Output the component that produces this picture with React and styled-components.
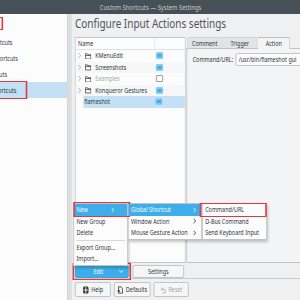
import React from 'react';
import styled, { createGlobalStyle } from 'styled-components';

// the reference is a squeezed screenshot: lay out wide, then squash horizontally
const SQUASH = 0.78;
const STAGE_W = 386;

const Global = createGlobalStyle`
  html, body { margin: 0; padding: 0; background: #eff0f1; overflow: hidden; }
  body {
    font-family: "Noto Sans", "Open Sans", sans-serif;
    font-size: 7px;
    color: #31363b;
  }
`;

const Stage = styled.div`
  position: relative;
  width: ${STAGE_W}px;
  height: 300px;
  transform: scaleX(${SQUASH});
  transform-origin: 0 0;
  display: flex;
  flex-direction: column;
  background: #eff0f1;
  overflow: hidden;
`;

const TitleBar = styled.header`
  height: 14px;
  flex: none;
  background: #475057;
  color: #c6c9cc;
  font-size: 7.5px;
  display: flex;
  align-items: center;
  justify-content: center;
`;

const Body = styled.div`
  flex: 1;
  min-height: 0;
  display: flex;
`;

const Sidebar = styled.aside`
  width: 86px;
  flex: none;
  background: #fcfcfc;
  overflow: hidden;
  display: flex;
  flex-direction: column;
`;

const SideTop = styled.div`
  position: relative;
  height: 20px;
  flex: none;
`;

const SideRow = styled.div`
  position: relative;
  height: 16px;
  flex: none;
  display: flex;
  align-items: center;
  background: ${p => (p.$selected ? '#c3e0f4' : 'transparent')};
`;

const SideLabel = styled.span`
  width: ${p => p.$end}px;
  flex: none;
  display: flex;
  justify-content: flex-end;
  white-space: nowrap;
`;

const Splitter = styled.div`
  width: 5px;
  flex: none;
  background: #dcdee0;
  border-left: 1px solid #d0d2d4;
`;

const Main = styled.main`
  flex: 1;
  min-width: 0;
  display: flex;
  flex-direction: column;
  padding-left: 4px;
`;

const Heading = styled.h1`
  margin: 0 0 5px;
  font-size: 12.8px;
  line-height: 18px;
  font-weight: 400;
  color: #50555a;
  white-space: nowrap;
`;

const Work = styled.div`
  height: 226px;
  flex: none;
  display: flex;
  gap: 1px;
`;

const Tree = styled.div`
  width: 140px;
  flex: none;
  background: #fcfcfc;
  border: 1px solid #c2c4c6;
  display: flex;
  flex-direction: column;
`;

const TreeHead = styled.div`
  height: 11px;
  flex: none;
  display: flex;
  border-bottom: 1px solid #dfe1e2;
`;

const HeadCell = styled.div`
  width: ${p => (p.$w ? `${p.$w}px` : 'auto')};
  flex: ${p => (p.$w ? 'none' : '1')};
  display: flex;
  align-items: center;
  padding-left: 3px;
  border-left: ${p => (p.$w ? 'none' : '1px solid #dfe1e2')};
`;

const TreeRow = styled.div`
  height: 11.5px;
  flex: none;
  display: flex;
  padding-left: ${p => p.$indent || 0}px;
  background: ${p => (p.$alt ? '#f6f7f7' : 'transparent')};
`;

const RowBody = styled.div`
  flex: 1;
  display: flex;
  align-items: center;
  background: ${p => (p.$selected ? '#c3e0f4' : 'transparent')};
`;

const NameCell = styled.div`
  width: ${p => p.$w}px;
  flex: none;
  display: flex;
  align-items: center;
  padding-left: ${p => p.$pad}px;
  color: ${p => (p.$muted ? '#a4a7aa' : '#31363b')};
  white-space: nowrap;
`;

const Twisty = styled.svg`
  width: 6px;
  height: 7px;
  margin-right: 4px;
  flex: none;
`;

const FolderIcon = styled.svg`
  width: 8px;
  height: 6.5px;
  margin-right: 5px;
  flex: none;
`;

const CheckCell = styled.div`
  flex: 1;
  display: flex;
  align-items: center;
  padding-left: 3px;
`;

const Check = styled.span`
  width: 9px;
  height: 7px;
  box-sizing: border-box;
  border: 1px solid ${p => (p.$on ? '#8ccbef' : '#8f9295')};
  background: ${p => (p.$on ? '#3daee9' : '#fcfcfc')};
  box-shadow: ${p => (p.$on ? 'inset 0 0 0 0.6px #bfe3f7' : 'none')};
  border-radius: 1px;
`;

const Tabs = styled.div`
  flex: 1;
  min-width: 0;
  margin-right: -2px;
  display: flex;
  flex-direction: column;
`;

const TabBar = styled.div`
  height: 11px;
  flex: none;
  display: flex;
  align-items: flex-end;
  padding-left: 1px;
  position: relative;
  z-index: 1;
`;

const Tab = styled.div`
  width: ${p => p.$w}px;
  height: ${p => (p.$active ? 12 : 11)}px;
  box-sizing: border-box;
  margin-bottom: ${p => (p.$active ? -1 : 0)}px;
  display: flex;
  align-items: center;
  justify-content: center;
  background: ${p => (p.$active ? '#f3f4f5' : '#e1e3e5')};
  border: 1px solid ${p => (p.$active ? '#bcbec0' : '#cfd1d3')};
  border-bottom: none;
  border-radius: 1.5px 1.5px 0 0;
`;

const Page = styled.div`
  flex: 1;
  background: #f3f4f5;
  border: 1px solid #c2c4c6;
  padding: 4px 0 0 7px;
  overflow: hidden;
`;

const Field = styled.div`
  display: flex;
  align-items: center;
  height: 13px;
`;

const FieldLabel = styled.span`
  width: 55px;
  flex: none;
  white-space: nowrap;
`;

const Input = styled.div`
  width: 120px;
  height: 13px;
  flex: none;
  box-sizing: border-box;
  display: flex;
  align-items: center;
  padding-left: 3px;
  background: #fcfcfc;
  border: 1px solid #bcbec0;
  border-radius: 2px;
  white-space: nowrap;
`;

const ActionRow = styled.div`
  height: 13px;
  flex: none;
  margin-top: 2px;
  display: flex;
  gap: 5px;
`;

const EditWrap = styled.div`
  position: relative;
  display: flex;
`;

const EditButton = styled.div`
  width: 69px;
  box-sizing: border-box;
  display: flex;
  align-items: center;
  background: #3daee9;
  border: 1px solid #2c9fda;
  border-radius: 2px;
  color: #fcfcfc;
`;

const EditText = styled.span`
  flex: 1;
  text-align: center;
  padding-left: 3px;
`;

const Caret = styled.svg`
  width: 7px;
  height: 5px;
  margin-right: 5px;
  flex: none;
`;

const Button = styled.div`
  width: ${p => p.$w}px;
  box-sizing: border-box;
  display: flex;
  align-items: center;
  justify-content: center;
  gap: 3px;
  background: #f5f6f6;
  border: 1px solid #bcbec0;
  border-radius: 2px;
  color: ${p => (p.$disabled ? '#a2a5a8' : '#31363b')};
`;

const BottomBar = styled.footer`
  flex: none;
  margin: 0 0 0 -4px;
  padding: 3px 0 3px 4px;
  border-top: 1px solid #c8cacc;
  display: flex;
  gap: 4px;
  height: 15px;
`;

const BtnIcon = styled.svg`
  width: 8px;
  height: 8px;
  flex: none;
`;

const MenuLayer = styled.div`
  position: absolute;
  left: 94px;
  top: 203px;
  display: flex;
  align-items: flex-start;
`;

const Menu = styled.div`
  --pr: ${p => p.$pr}px;
  width: ${p => p.$w}px;
  box-sizing: border-box;
  background: #fcfcfc;
  border: 1px solid #c0c2c4;
  box-shadow: 1px 2px 3px rgba(0, 0, 0, 0.22);
`;

const MenuItem = styled.div`
  position: relative;
  height: 11.5px;
  display: flex;
  align-items: center;
  padding: 0 var(--pr) 0 3px;
  white-space: nowrap;
  background: ${p => (p.$hl ? '#3daee9' : 'transparent')};
  color: ${p => (p.$hl ? '#fcfcfc' : '#31363b')};
`;

const MenuSep = styled.div`
  height: 3px;
  display: flex;
  align-items: center;
  &::after {
    content: '';
    flex: 1;
    height: 1px;
    margin: 0 3px;
    background: #d6d8da;
  }
`;

const Arrow = styled.svg`
  width: 5px;
  height: 6px;
  margin-left: auto;
  flex: none;
`;

const Frame = styled.span`
  position: absolute;
  pointer-events: none;
  top: ${p => p.$t}px;
  right: ${p => p.$r}px;
  bottom: ${p => p.$b}px;
  left: ${p => p.$l}px;
  border: 1.5px solid #e8363c;
  border-left-width: 2px;
  border-right-width: 2px;
`;

const sideItems = [
  { label: 'Global Shortcuts', end: 16 },
  { label: 'Standard Shortcuts', end: 23 },
  { label: 'Web Shortcuts', end: 9 },
  { label: 'Custom Shortcuts', end: 21, selected: true },
];

const groups = [
  { name: 'KMenuEdit', on: true },
  { name: 'Screenshots', on: true },
  { name: 'Examples', on: false, muted: true },
  { name: 'Konqueror Gestures', on: true },
];

const Chevron = ({ color = '#9da0a3' }) => (
  <Twisty viewBox="0 0 6 8">
    <path d="M1.5 1 L4.5 4 L1.5 7" fill="none" stroke={color} strokeWidth="1" />
  </Twisty>
);

const Folder = () => (
  <FolderIcon viewBox="0 0 16 13">
    <path d="M1 1.5h5l1.5 2H15v8.5H1z M1 5h14" fill="none" stroke="#31363b" strokeWidth="1.6" />
  </FolderIcon>
);

const SubArrow = () => (
  <Arrow viewBox="0 0 5 6">
    <path d="M1.2 0.8 L3.8 3 L1.2 5.2" fill="none" stroke="currentColor" strokeWidth="0.9" />
  </Arrow>
);

export default function App() {
  return (
    <>
      <Global />
      <Stage>
        <TitleBar>Custom Shortcuts — System Settings</TitleBar>
        <Body>
          <Sidebar>
            <SideTop>
              <Frame $t={3} $b={4} $l={-40} $r={82} />
            </SideTop>
            {sideItems.map(it => (
              <SideRow key={it.label} $selected={it.selected}>
                <SideLabel $end={it.end}>{it.label}</SideLabel>
                {it.selected && <Frame $t={-1} $b={-1} $l={-10} $r={51} />}
              </SideRow>
            ))}
          </Sidebar>
          <Splitter />
          <Main>
            <Heading>Configure Input Actions settings</Heading>
            <Work>
              <Tree>
                <TreeHead>
                  <HeadCell $w={98}>Name</HeadCell>
                  <HeadCell />
                </TreeHead>
                {groups.map((g, i) => (
                  <TreeRow key={g.name} $alt={i % 2 === 1}>
                    <RowBody>
                      <NameCell $w={98} $pad={2} $muted={g.muted}>
                        <Chevron />
                        <Folder />
                        {g.name}
                      </NameCell>
                      <CheckCell>
                        <Check $on={g.on} />
                      </CheckCell>
                    </RowBody>
                  </TreeRow>
                ))}
                <TreeRow $indent={10}>
                  <RowBody $selected>
                    <NameCell $w={88} $pad={1}>flameshot</NameCell>
                    <CheckCell>
                      <Check $on />
                    </CheckCell>
                  </RowBody>
                </TreeRow>
              </Tree>
              <Tabs>
                <TabBar>
                  <Tab $w={45}>Comment</Tab>
                  <Tab $w={45}>Trigger</Tab>
                  <Tab $w={42} $active>Action</Tab>
                </TabBar>
                <Page>
                  <Field>
                    <FieldLabel>Command/URL:</FieldLabel>
                    <Input>/usr/bin/flameshot gui</Input>
                  </Field>
                </Page>
              </Tabs>
            </Work>
            <ActionRow>
              <EditWrap>
                <EditButton>
                  <EditText>Edit</EditText>
                  <Caret viewBox="0 0 7 5">
                    <path d="M1 1.2 L3.5 3.6 L6 1.2" fill="none" stroke="#fcfcfc" strokeWidth="0.9" />
                  </Caret>
                </EditButton>
                <Frame $t={-2} $b={-2} $l={-3} $r={-3} />
              </EditWrap>
              <Button $w={66}>Settings</Button>
            </ActionRow>
            <BottomBar>
              <Button $w={46}>
                <BtnIcon viewBox="0 0 8 8">
                  <rect x="0.5" y="0.5" width="7" height="7" rx="1.5" fill="#31363b" />
                  <path d="M4 1v6 M1 4h6" stroke="#f5f6f6" strokeWidth="1" />
                </BtnIcon>
                Help
              </Button>
              <Button $w={47}>
                <BtnIcon viewBox="0 0 8 8">
                  <path d="M2 0.8h3.2l1.8 1.8v4.6H2z" fill="none" stroke="#31363b" strokeWidth="0.9" />
                  <path d="M0.6 5h3 M2 3.8 L3.4 5 L2 6.2" fill="none" stroke="#31363b" strokeWidth="0.9" />
                </BtnIcon>
                Defaults
              </Button>
              <Button $w={45} $disabled>
                <BtnIcon viewBox="0 0 8 8">
                  <path d="M2.2 3.2h3a2 2 0 0 1 0 4H3.5 M3.6 1.6 L2 3.2 L3.6 4.8" fill="none" stroke="#a2a5a8" strokeWidth="0.9" />
                </BtnIcon>
                Reset
              </Button>
            </BottomBar>
          </Main>
        </Body>

        <MenuLayer>
          <Menu $w={70} $pr={16}>
            <MenuItem $hl>
              New
              <SubArrow />
              <Frame $t={-2} $b={-1.5} $l={-1} $r={-4} />
            </MenuItem>
            <MenuItem>New Group</MenuItem>
            <MenuItem>Delete</MenuItem>
            <MenuSep />
            <MenuItem>Export Group...</MenuItem>
            <MenuItem>Import...</MenuItem>
          </Menu>
          <Menu $w={95} $pr={6}>
            <MenuItem $hl>
              Global Shortcut
              <SubArrow />
            </MenuItem>
            <MenuItem>
              Window Action
              <SubArrow />
            </MenuItem>
            <MenuItem>
              Mouse Gesture Action
              <SubArrow />
            </MenuItem>
          </Menu>
          <Menu $w={83} $pr={4}>
            <MenuItem>
              Command/URL
              <Frame $t={-1} $b={-1.5} $l={-4} $r={-1} />
            </MenuItem>
            <MenuItem>D-Bus Command</MenuItem>
            <MenuItem>Send Keyboard Input</MenuItem>
          </Menu>
        </MenuLayer>
      </Stage>
    </>
  );
}
